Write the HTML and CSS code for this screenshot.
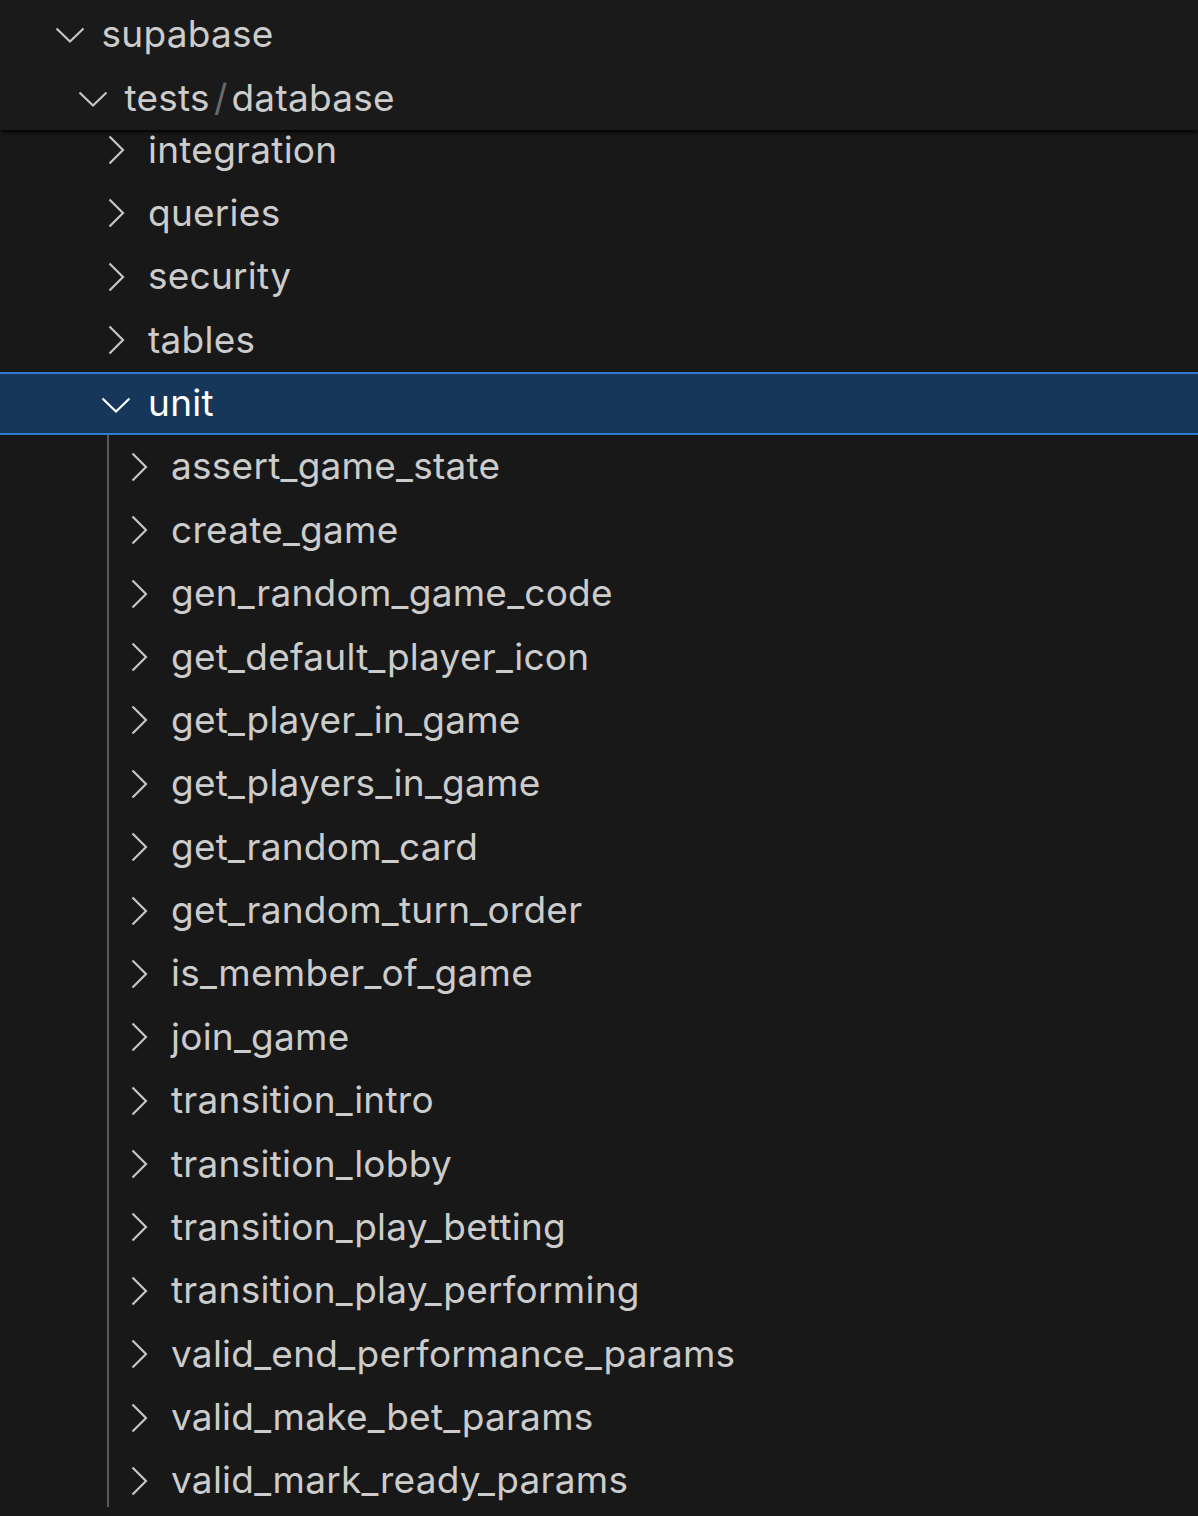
FILE: index.html
```html
<!DOCTYPE html>
<html>
<head>
<meta charset="utf-8">
<link rel="stylesheet" href="styles.css">
</head>
<body>
<div class="explorer">
  <div class="sticky">
    <div class="row lvl0">
      <svg class="tw" viewBox="0 0 32 32"><polyline points="2.5,10.5 16,23.5 29.5,10.5"/></svg>
      <span class="label">supabase</span>
    </div>
    <div class="row lvl1">
      <svg class="tw" viewBox="0 0 32 32"><polyline points="2.5,10.5 16,23.5 29.5,10.5"/></svg>
      <span class="label">tests<span class="sep">/</span>database</span>
    </div>
  </div>
  <div class="list">
    <div class="item lvl2"><svg class="tw" viewBox="0 0 32 32"><polyline points="9.5,2.5 23,16 9.5,29.5"/></svg><span class="label">integration</span></div>
    <div class="item lvl2"><svg class="tw" viewBox="0 0 32 32"><polyline points="9.5,2.5 23,16 9.5,29.5"/></svg><span class="label">queries</span></div>
    <div class="item lvl2"><svg class="tw" viewBox="0 0 32 32"><polyline points="9.5,2.5 23,16 9.5,29.5"/></svg><span class="label">security</span></div>
    <div class="item lvl2"><svg class="tw" viewBox="0 0 32 32"><polyline points="9.5,2.5 23,16 9.5,29.5"/></svg><span class="label">tables</span></div>
    <div class="item lvl2 selected"><svg class="tw" viewBox="0 0 32 32"><polyline points="2.5,10.5 16,23.5 29.5,10.5"/></svg><span class="label">unit</span></div>
    <div class="children">
      <div class="item lvl3"><svg class="tw" viewBox="0 0 32 32"><polyline points="9.5,2.5 23,16 9.5,29.5"/></svg><span class="label">assert_game_state</span></div>
      <div class="item lvl3"><svg class="tw" viewBox="0 0 32 32"><polyline points="9.5,2.5 23,16 9.5,29.5"/></svg><span class="label">create_game</span></div>
      <div class="item lvl3"><svg class="tw" viewBox="0 0 32 32"><polyline points="9.5,2.5 23,16 9.5,29.5"/></svg><span class="label">gen_random_game_code</span></div>
      <div class="item lvl3"><svg class="tw" viewBox="0 0 32 32"><polyline points="9.5,2.5 23,16 9.5,29.5"/></svg><span class="label">get_default_player_icon</span></div>
      <div class="item lvl3"><svg class="tw" viewBox="0 0 32 32"><polyline points="9.5,2.5 23,16 9.5,29.5"/></svg><span class="label">get_player_in_game</span></div>
      <div class="item lvl3"><svg class="tw" viewBox="0 0 32 32"><polyline points="9.5,2.5 23,16 9.5,29.5"/></svg><span class="label">get_players_in_game</span></div>
      <div class="item lvl3"><svg class="tw" viewBox="0 0 32 32"><polyline points="9.5,2.5 23,16 9.5,29.5"/></svg><span class="label">get_random_card</span></div>
      <div class="item lvl3"><svg class="tw" viewBox="0 0 32 32"><polyline points="9.5,2.5 23,16 9.5,29.5"/></svg><span class="label">get_random_turn_order</span></div>
      <div class="item lvl3"><svg class="tw" viewBox="0 0 32 32"><polyline points="9.5,2.5 23,16 9.5,29.5"/></svg><span class="label">is_member_of_game</span></div>
      <div class="item lvl3"><svg class="tw" viewBox="0 0 32 32"><polyline points="9.5,2.5 23,16 9.5,29.5"/></svg><span class="label">join_game</span></div>
      <div class="item lvl3"><svg class="tw" viewBox="0 0 32 32"><polyline points="9.5,2.5 23,16 9.5,29.5"/></svg><span class="label">transition_intro</span></div>
      <div class="item lvl3"><svg class="tw" viewBox="0 0 32 32"><polyline points="9.5,2.5 23,16 9.5,29.5"/></svg><span class="label">transition_lobby</span></div>
      <div class="item lvl3"><svg class="tw" viewBox="0 0 32 32"><polyline points="9.5,2.5 23,16 9.5,29.5"/></svg><span class="label">transition_play_betting</span></div>
      <div class="item lvl3"><svg class="tw" viewBox="0 0 32 32"><polyline points="9.5,2.5 23,16 9.5,29.5"/></svg><span class="label">transition_play_performing</span></div>
      <div class="item lvl3"><svg class="tw" viewBox="0 0 32 32"><polyline points="9.5,2.5 23,16 9.5,29.5"/></svg><span class="label">valid_end_performance_params</span></div>
      <div class="item lvl3"><svg class="tw" viewBox="0 0 32 32"><polyline points="9.5,2.5 23,16 9.5,29.5"/></svg><span class="label">valid_make_bet_params</span></div>
      <div class="item lvl3"><svg class="tw" viewBox="0 0 32 32"><polyline points="9.5,2.5 23,16 9.5,29.5"/></svg><span class="label">valid_mark_ready_params</span></div>
    </div>
  </div>
</div>
</body>
</html>
```

FILE: styles.css
```css
html, body {
  margin: 0;
  padding: 0;
  background: #181818;
  height: 100%;
  overflow: hidden;
}

.explorer {
  font-family: Inter, "Noto Sans", "Liberation Sans", sans-serif;
  font-size: 37px;
  line-height: 1;
  color: #cccccc;
  width: 1198px;
}

.sticky {
  position: relative;
  z-index: 2;
  background: #1a1a1a;
  padding-top: 2px;
  box-shadow: 0 3px 4px -1px #000000;
}

.row {
  display: flex;
  align-items: center;
  height: 64px;
  box-sizing: border-box;
}

.item {
  display: flex;
  align-items: center;
  height: 63.375px;
  box-sizing: border-box;
}

.label {
  white-space: nowrap;
  letter-spacing: 0.25px;
  padding-bottom: 2px;
}

.tw {
  width: 32px;
  height: 32px;
  flex: none;
  margin-right: 16px;
  fill: none;
  stroke: #c5c5c5;
  stroke-width: 2.2;
  stroke-linecap: butt;
  stroke-linejoin: miter;
}

.lvl0 { padding-left: 53.5px; }
.lvl1 { padding-left: 76.5px; }
.lvl2 { padding-left: 100px; }
.lvl3 { padding-left: 123px; }

.sep {
  color: #6a6a6a;
  margin: 0 4px;
}

.list {
  position: relative;
  z-index: 1;
  margin-top: -11.7px;
}

.selected {
  background: #17375a;
  border-top: 2px solid #2f7bd2;
  border-bottom: 2px solid #2f7bd2;
  color: #ffffff;
}

.selected .tw {
  stroke: #ffffff;
}

.children {
  position: relative;
}

.children::before {
  content: "";
  position: absolute;
  left: 107px;
  top: 0;
  bottom: 6px;
  width: 2px;
  background: #585858;
}
```
